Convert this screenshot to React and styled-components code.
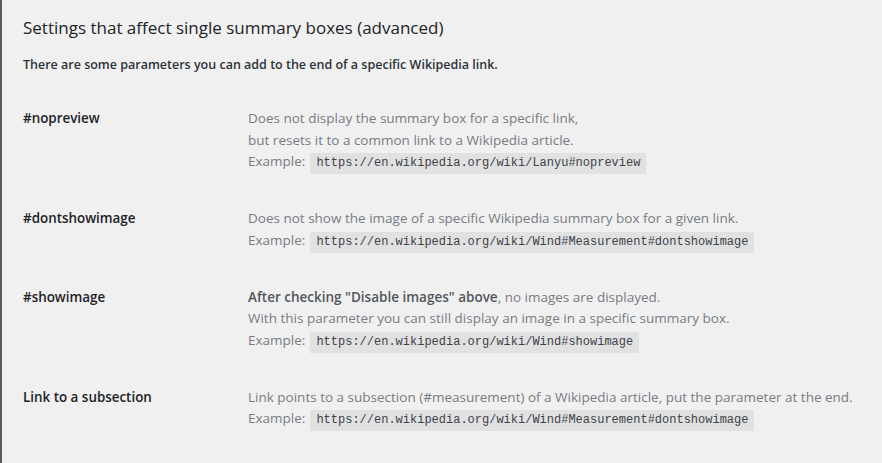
import React from 'react';
import styled, { createGlobalStyle } from 'styled-components';

const GlobalStyle = createGlobalStyle`
  html, body {
    margin: 0;
    padding: 0;
    background: #f0f0f1;
  }
`;

const Page = styled.div`
  min-height: 463px;
  box-sizing: border-box;
  border-left: 2px solid #5a5a5a;
  background: #f0f0f1;
  padding: 16px 20px 0 21px;
  font-family: 'Open Sans', 'Noto Sans', sans-serif;
`;

const Title = styled.h2`
  margin: 0;
  font-size: 17px;
  line-height: 24px;
  font-weight: 400;
  color: #1d2327;
`;

const Intro = styled.p`
  margin: 15px 0 16px;
  font-size: 12.5px;
  line-height: 20px;
  font-weight: 600;
  color: #2c3338;
`;

const Row = styled.div`
  display: grid;
  grid-template-columns: 225px 1fr;
  padding: 17px 0 17px;
`;

const Label = styled.div`
  font-size: 13.4px;
  line-height: 21.5px;
  font-weight: 600;
  color: #1d2327;
`;

const Description = styled.div`
  font-size: 13.5px;
  line-height: 21.5px;
  color: #787c82;
`;

const Strong = styled.span`
  font-weight: 600;
  color: #50575e;
`;

const Code = styled.code`
  display: inline-block;
  margin-left: 5px;
  padding: 0 6px;
  line-height: 21px;
  background: #e1e1e1;
  color: #3c434a;
  font-family: 'Liberation Mono', 'DejaVu Sans Mono', monospace;
  font-size: 12px;
`;

const rows = [
  {
    label: '#nopreview',
    lines: [
      'Does not display the summary box for a specific link,',
      'but resets it to a common link to a Wikipedia article.',
    ],
    example: 'https://en.wikipedia.org/wiki/Lanyu#nopreview',
  },
  {
    label: '#dontshowimage',
    lines: ['Does not show the image of a specific Wikipedia summary box for a given link.'],
    example: 'https://en.wikipedia.org/wiki/Wind#Measurement#dontshowimage',
  },
  {
    label: '#showimage',
    lines: [
      <>
        <Strong>After checking "Disable images" above</Strong>, no images are displayed.
      </>,
      'With this parameter you can still display an image in a specific summary box.',
    ],
    example: 'https://en.wikipedia.org/wiki/Wind#showimage',
  },
  {
    label: 'Link to a subsection',
    lines: [
      'Link points to a subsection (#measurement) of a Wikipedia article, put the parameter at the end.',
    ],
    example: 'https://en.wikipedia.org/wiki/Wind#Measurement#dontshowimage',
  },
];

export default function App() {
  return (
    <>
      <GlobalStyle />
      <Page>
        <Title>Settings that affect single summary boxes (advanced)</Title>
        <Intro>There are some parameters you can add to the end of a specific Wikipedia link.</Intro>
        {rows.map((row) => (
          <Row key={row.label}>
            <Label>{row.label}</Label>
            <Description>
              {row.lines.map((line, i) => (
                <div key={i}>{line}</div>
              ))}
              <div>
                Example:<Code>{row.example}</Code>
              </div>
            </Description>
          </Row>
        ))}
      </Page>
    </>
  );
}
